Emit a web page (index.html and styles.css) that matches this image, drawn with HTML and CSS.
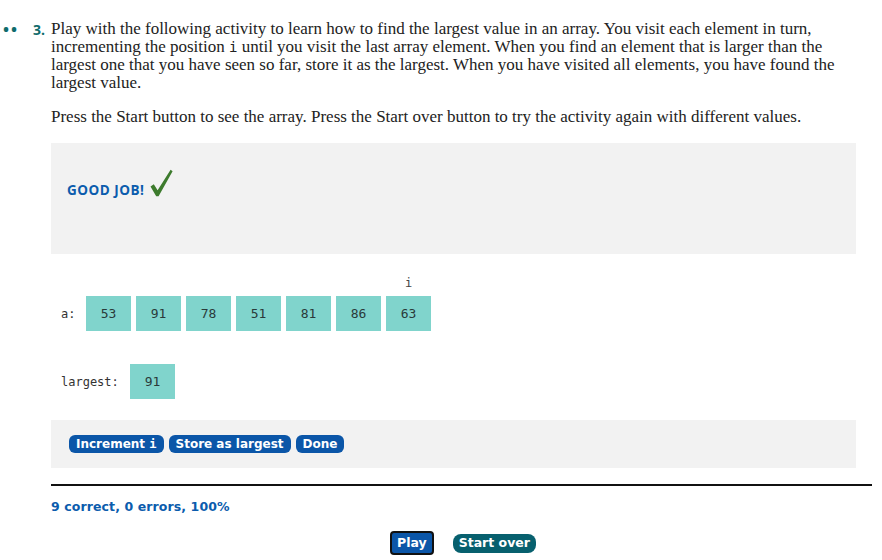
FILE: index.html
```html
<!DOCTYPE html>
<html>
<head>
<meta charset="utf-8">
<link rel="stylesheet" href="styles.css">
</head>
<body>
<div class="exercise">
  <div class="marker"><span class="dots">••</span><span class="num">3.</span></div>
  <div class="content">
    <p class="lead">Play with the following activity to learn how to find the largest value in an array. You visit each element in turn, incrementing the position <code>i</code> until you visit the last array element. When you find an element that is larger than the largest one that you have seen so far, store it as the largest. When you have visited all elements, you have found the largest value.</p>
    <p class="lead second">Press the Start button to see the array. Press the Start over button to try the activity again with different values.</p>
    <div class="feedback">
      <div class="feedback-line">
        <span class="good">GOOD JOB!</span>
        <svg class="check" width="23" height="28" viewBox="0 0 23 28" aria-hidden="true"><path d="M0.5 17.5 L3.8 15.2 L7.6 21.2 L20.6 0.8 L22.6 2.2 L8.6 27.2 L6.2 27.2 Z" fill="#3d7b2d"/></svg>
      </div>
    </div>
    <div class="arrays">
      <div class="index-row"><span class="idx">i</span></div>
      <div class="row">
        <span class="label">a:</span>
        <div class="cells">
          <span class="cell">53</span><span class="cell">91</span><span class="cell">78</span><span class="cell">51</span><span class="cell">81</span><span class="cell">86</span><span class="cell">63</span>
        </div>
      </div>
      <div class="row largest-row">
        <span class="label">largest:</span>
        <div class="cells"><span class="cell">91</span></div>
      </div>
    </div>
    <div class="actions">
      <button class="btn">Increment <span class="mono">i</span></button>
      <button class="btn">Store as largest</button>
      <button class="btn">Done</button>
    </div>
    <hr class="rule">
    <div class="score">9 correct, 0 errors, 100%</div>
    <div class="controls">
      <button class="btn big play">Play</button>
      <button class="btn big restart">Start over</button>
    </div>
  </div>
</div>
</body>
</html>
```
FILE: styles.css
```css
html, body {
  margin: 0;
  padding: 0;
  background: #fff;
}
body {
  font-family: "Liberation Serif", "DejaVu Serif", serif;
  color: #222;
}
.exercise {
  display: flex;
  padding: 20px 10px 0 0;
}
.marker {
  width: 51px;
  flex: none;
  display: flex;
  align-items: baseline;
  padding-left: 3px;
  box-sizing: border-box;
  font-family: "Open Sans", "DejaVu Sans", sans-serif;
  font-weight: 700;
  font-size: 14px;
  line-height: 18px;
  color: #0e6b6b;
}
.dots {
  font-size: 16px;
  letter-spacing: 2px;
  width: 30px;
}
.num {
  color: #0e6b6b;
}
.content {
  flex: 1;
  min-width: 0;
}
.lead {
  margin: 0;
  font-size: 17px;
  line-height: 18px;
  padding-right: 24px;
}
.lead code {
  font-family: "DejaVu Sans Mono", monospace;
  font-size: 14px;
  line-height: 1;
}
.second {
  margin-top: 16px;
}
.feedback {
  margin-top: 17px;
  width: 805px;
  height: 111px;
  background: #f2f2f2;
  box-sizing: border-box;
  padding: 26px 16px 0;
}
.feedback-line {
  display: flex;
  align-items: flex-end;
}
.good {
  font-family: "Open Sans", "DejaVu Sans", sans-serif;
  font-weight: 700;
  font-size: 13.5px;
  color: #0b5cad;
  letter-spacing: 0.5px;
  line-height: 18px;
}
.check {
  display: block;
  margin-left: 6px;
  margin-bottom: 2px;
}
.arrays {
  padding: 20px 0 0 10px;
  font-family: "DejaVu Sans Mono", monospace;
  font-size: 12px;
  color: #333;
}
.index-row {
  padding-left: 325px;
  height: 22px;
  line-height: 18px;
}
.idx {
  display: inline-block;
  width: 45px;
  text-align: center;
  font-size: 12px;
  color: #444;
}
.row {
  display: flex;
  align-items: center;
}
.label {
  width: 25px;
  flex: none;
}
.cells {
  display: flex;
  gap: 5px;
}
.cell {
  width: 45px;
  height: 35px;
  background: #80d4cc;
  display: flex;
  align-items: center;
  justify-content: center;
  color: #2a3a3a;
  font-size: 13px;
}
.largest-row {
  margin-top: 33px;
}
.largest-row .label {
  width: 69px;
}
.actions {
  margin-top: 21px;
  width: 805px;
  height: 48px;
  background: #f2f2f2;
  box-sizing: border-box;
  padding: 0 0 0 18px;
  display: flex;
  align-items: center;
  gap: 5px;
}
.btn {
  font-family: "DejaVu Sans", sans-serif;
  font-weight: 700;
  font-size: 12px;
  color: #fff;
  background: #0b56a8;
  border: none;
  border-radius: 6px;
  height: 18px;
  padding: 0 7px;
  line-height: 18px;
  margin: 0;
}
.mono {
  font-family: "DejaVu Sans Mono", monospace;
}
.rule {
  margin: 16px 0 0 0;
  border: none;
  border-top: 2px solid #111;
  height: 0;
}
.score {
  margin-top: 13px;
  font-family: "DejaVu Sans", sans-serif;
  font-weight: 700;
  font-size: 12.5px;
  color: #0b5cad;
  letter-spacing: 0.1px;
}
.controls {
  margin-top: 17px;
  display: flex;
  align-items: center;
  padding-left: 339px;
  gap: 19px;
}
.big {
  font-size: 12.5px;
  height: 19px;
}
.play {
  height: 24px;
  border: 2px solid #111;
  border-radius: 4px;
  padding: 0 5px;
}
.restart {
  background: #07606e;
  border-radius: 8px;
  padding: 0 6px;
}
```
